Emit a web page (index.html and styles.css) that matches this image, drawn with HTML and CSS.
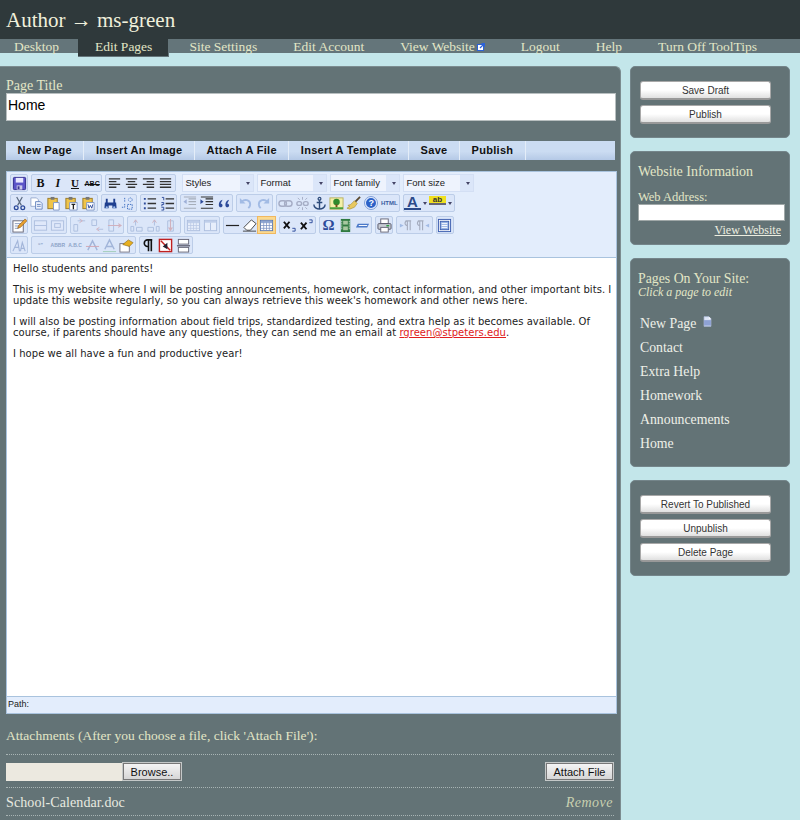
FILE: index.html
```html
<!DOCTYPE html>
<html lang="en">
<head>
    <meta charset="UTF-8">
    <title>Author - ms-green</title>
    <link rel="stylesheet" href="styles.css">
</head>
<body>
    <svg class="defs" width="0" height="0">
        <symbol id="i-save" viewBox="0 0 16 16"><rect x="1.500" y="1.500" width="13" height="13" rx="1" fill="#5b55c8" stroke="#2f2a8c"/><rect x="4" y="2" width="8" height="5" fill="#e8e8ff"/><rect x="5" y="10" width="6" height="4.500" fill="#c9c9e8"/><rect x="6" y="11" width="2" height="3" fill="#3a3590"/></symbol>
        <symbol id="i-left" viewBox="0 0 16 16"><path d="M2 3h12M2 6h8M2 9h12M2 12h8" stroke="#333" stroke-width="1.400"/></symbol>
        <symbol id="i-center" viewBox="0 0 16 16"><path d="M2 3h12M4 6h8M2 9h12M4 12h8" stroke="#333" stroke-width="1.400"/></symbol>
        <symbol id="i-right" viewBox="0 0 16 16"><path d="M2 3h12M6 6h8M2 9h12M6 12h8" stroke="#333" stroke-width="1.400"/></symbol>
        <symbol id="i-full" viewBox="0 0 16 16"><path d="M2 3h12M2 6h12M2 9h12M2 12h12" stroke="#333" stroke-width="1.400"/></symbol>
        <symbol id="i-cut" viewBox="0 0 16 16"><path d="M5 1l5 9M11 1l-5 9" stroke="#5a6a80" stroke-width="1.300"/><circle cx="4.500" cy="12.500" r="2" fill="none" stroke="#2c4a9a" stroke-width="1.400"/><circle cx="11.500" cy="12.500" r="2" fill="none" stroke="#2c4a9a" stroke-width="1.400"/></symbol>
        <symbol id="i-copy" viewBox="0 0 16 16"><path d="M2 2h6l2 2v7H2z" fill="#fff" stroke="#9aaccf"/><path d="M7 6h5l2 2v6H7z" fill="#eef3fd" stroke="#6a88c0"/><path d="M8.500 9h4M8.500 11h4" stroke="#6a88c0"/></symbol>
        <symbol id="i-paste" viewBox="0 0 16 16"><rect x="2" y="2.500" width="10" height="11" fill="#efc44a" stroke="#9a7a28"/><rect x="5" y="1" width="4" height="3" fill="#777"/><path d="M8 7h6v8H8z" fill="#fff" stroke="#7f96c4"/></symbol>
        <symbol id="i-pastetext" viewBox="0 0 16 16"><rect x="2" y="2.500" width="10" height="11" fill="#efc44a" stroke="#9a7a28"/><rect x="5" y="1" width="4" height="3" fill="#777"/><path d="M6 7h8v8H6z" fill="#fff" stroke="#7f96c4"/><path d="M8 9h4M10 9v5" stroke="#222" stroke-width="1.400"/></symbol>
        <symbol id="i-pasteword" viewBox="0 0 16 16"><rect x="2" y="2.500" width="10" height="11" fill="#efc44a" stroke="#9a7a28"/><rect x="5" y="1" width="4" height="3" fill="#777"/><path d="M6 7h8v8H6z" fill="#fff" stroke="#7f96c4"/><path d="M7.500 9l1 4 1.500-3 1.500 3 1-4" fill="none" stroke="#2c4a9a"/></symbol>
        <symbol id="i-find" viewBox="0 0 16 16"><path d="M2 7h4v6H1.500zM10 7h4l.5 6H10zM6 7h4v3H6zM3 3h2v4H3zM11 3h2v4h-2z" fill="#1f3f8f"/><circle cx="4" cy="12" r="1.200" fill="#9fc0f0"/><circle cx="12" cy="12" r="1.200" fill="#9fc0f0"/></symbol>
        <symbol id="i-replace" viewBox="0 0 16 16"><path d="M5 2v5M2 12h3V8" fill="none" stroke="#3a6cc0" stroke-dasharray="1.500 1"/><circle cx="11" cy="4" r="2" fill="none" stroke="#3a6cc0" stroke-dasharray="1 1"/><path d="M8 9h5v5H8z" fill="none" stroke="#3a6cc0" stroke-dasharray="1.500 1"/></symbol>
        <symbol id="i-ul" viewBox="0 0 16 16"><path d="M6 3h9M6 8h9M6 13h9" stroke="#333" stroke-width="1.400"/><path d="M2 2h2v2H2zM2 7h2v2H2zM2 12h2v2H2z" fill="#2c4a9a"/></symbol>
        <symbol id="i-ol" viewBox="0 0 16 16"><path d="M6 3h9M6 8h9M6 13h9" stroke="#333" stroke-width="1.400"/><path d="M2 1.500h2v3M1.500 7H4v2H2v2M1.500 12H4v3H1.500" fill="none" stroke="#2c4a9a"/></symbol>
        <symbol id="i-outdent" viewBox="0 0 16 16"><path d="M7 3h8M7 6h8M7 9h8M2 13h13M2 1h13" stroke="#444" stroke-width="1.200"/><path d="M5 3.500v5L1.500 6z" fill="#2c4a9a"/></symbol>
        <symbol id="i-indent" viewBox="0 0 16 16"><path d="M7 3h8M7 6h8M7 9h8M2 13h13M2 1h13" stroke="#333" stroke-width="1.200"/><path d="M1.500 3.500v5L5 6z" fill="#2c4a9a"/></symbol>
        <symbol id="i-quote" viewBox="0 0 16 16"><path d="M7 4C4 5 3 7 3 9.500 3 11 4 12 5 12s2-1 2-2-1-2-2-2M14 4c-3 1-4 3-4 5.500 0 1.500 1 2.500 2 2.500s2-1 2-2-1-2-2-2" fill="#2c4a9a"/></symbol>
        <symbol id="i-undo" viewBox="0 0 16 16"><path d="M4 6c3-3 9-2 9 3 0 2-1 3-2 4" fill="none" stroke="#3a6cc0" stroke-width="2"/><path d="M2 2v6h6z" fill="#3a6cc0"/></symbol>
        <symbol id="i-redo" viewBox="0 0 16 16"><path d="M12 6C9 3 3 4 3 9c0 2 1 3 2 4" fill="none" stroke="#3a6cc0" stroke-width="2"/><path d="M14 2v6H8z" fill="#3a6cc0"/></symbol>
        <symbol id="i-link" viewBox="0 0 16 16"><rect x="1" y="5" width="8" height="6" rx="3" fill="none" stroke="#446" stroke-width="1.500"/><rect x="7" y="5" width="8" height="6" rx="3" fill="none" stroke="#446" stroke-width="1.500"/></symbol>
        <symbol id="i-unlink" viewBox="0 0 16 16"><rect x="2" y="6" width="5" height="4" rx="2" fill="none" stroke="#446" stroke-width="1.500"/><rect x="9" y="6" width="5" height="4" rx="2" fill="none" stroke="#446" stroke-width="1.500"/><path d="M8 1v3M8 12v3M3 2l2 2M13 2l-2 2M3 14l2-2M13 14l-2-2" stroke="#446"/></symbol>
        <symbol id="i-anchor" viewBox="0 0 16 16"><circle cx="8" cy="3" r="1.500" fill="none" stroke="#2c4a7a" stroke-width="1.300"/><path d="M8 4.500V14M5 7h6M2 9c0 3 3 5 6 5s6-2 6-5" fill="none" stroke="#2c4a7a" stroke-width="1.500"/></symbol>
        <symbol id="i-image" viewBox="0 0 16 16"><rect x="1" y="2" width="14" height="12" fill="#f4f0a8" stroke="#b8b060"/><circle cx="8" cy="6.500" r="3.500" fill="#2f8a2c"/><rect x="7" y="9" width="2" height="3" fill="#7a4a1c"/><path d="M1 12h14v2H1z" fill="#4aa03c"/></symbol>
        <symbol id="i-clean" viewBox="0 0 16 16"><path d="M15 1L9 7" stroke="#5a4a30" stroke-width="2"/><path d="M9 5l3 3-3 4-5 2-3-1 3-2-2-1 3-1z" fill="#e8c860" stroke="#a08a30" stroke-width=".6"/></symbol>
        <symbol id="i-edit" viewBox="0 0 16 16"><rect x="1" y="3" width="11" height="12" fill="#fff" stroke="#667"/><path d="M3 6h7M3 8.500h5M3 11h4" stroke="#8899bb"/><path d="M14 1l2 2-7 7-3 1 1-3z" fill="#e8a030" stroke="#805010" stroke-width=".6"/></symbol>
        <symbol id="i-rows" viewBox="0 0 16 16"><rect x="1.500" y="3" width="13" height="10" fill="#e8eefc" stroke="#5a78b0"/><path d="M1.500 8h13" stroke="#5a78b0"/></symbol>
        <symbol id="i-box" viewBox="0 0 16 16"><rect x="1.500" y="3" width="13" height="10" fill="#e8eefc" stroke="#5a78b0"/><rect x="5" y="6" width="6" height="4" fill="none" stroke="#5a78b0"/></symbol>
        <symbol id="i-tl" viewBox="0 0 16 16"><path d="M2 7h4v7H2zM6 3h8" fill="none" stroke="#5a78b0"/><path d="M8 5l3-2-3-2" fill="none" stroke="#c05050"/></symbol>
        <symbol id="i-tm" viewBox="0 0 16 16"><path d="M2 2h5v6H2zM8 12h6" fill="none" stroke="#5a78b0"/><path d="M10 10l-3 2 3 2" fill="none" stroke="#c05050"/></symbol>
        <symbol id="i-tr" viewBox="0 0 16 16"><path d="M2 2h5v12H2z" fill="none" stroke="#5a78b0"/><path d="M1 8h13M12 6l3 2-3 2" fill="none" stroke="#c05050" stroke-width="1.200"/></symbol>
        <symbol id="i-c1" viewBox="0 0 16 16"><path d="M2 9h3v5H2zM8 10h6v4H8zM7 2v6" fill="none" stroke="#5a78b0"/><path d="M5 5l2-3 2 3" fill="none" stroke="#c05050"/></symbol>
        <symbol id="i-c2" viewBox="0 0 16 16"><path d="M2 10h6v4H2zM11 9h3v5h-3zM9 2v6" fill="none" stroke="#5a78b0"/><path d="M7 5l2-3 2 3" fill="none" stroke="#c05050"/></symbol>
        <symbol id="i-c3" viewBox="0 0 16 16"><path d="M5 3h6v11H5z" fill="none" stroke="#5a78b0"/><path d="M8 1v12M6 10l2 3 2-3" fill="none" stroke="#c05050" stroke-width="1.200"/></symbol>
        <symbol id="i-table" viewBox="0 0 16 16"><rect x="1.500" y="2.500" width="13" height="11" fill="#fff" stroke="#5a78b0"/><path d="M1.500 5h13M1.500 8h13M1.500 11h13M5 2.500v11M8 2.500v11M11 2.500v11" stroke="#7a90c0" stroke-width=".8"/><path d="M2 3h12v2H2z" fill="#8ca4d0"/></symbol>
        <symbol id="i-split" viewBox="0 0 16 16"><rect x="1.500" y="2.500" width="13" height="11" fill="#fff" stroke="#5a78b0"/><path d="M2 3h12v2H2z" fill="#8ca4d0"/><path d="M8 5v8" stroke="#5a78b0"/></symbol>
        <symbol id="i-hr" viewBox="0 0 16 16"><path d="M1 8h14" stroke="#222" stroke-width="1.300"/></symbol>
        <symbol id="i-erase" viewBox="0 0 16 16"><path d="M10 2l5 4-6 7H5L2 10z" fill="#fff" stroke="#444"/><path d="M1 14h14" stroke="#444"/></symbol>
        <symbol id="i-sub" viewBox="0 0 16 16"><path d="M2 4l6 7M8 4l-6 7" stroke="#111" stroke-width="2"/><path d="M11 11h3v3h-3" fill="none" stroke="#2c4a9a"/></symbol>
        <symbol id="i-sup" viewBox="0 0 16 16"><path d="M2 5l6 7M8 5l-6 7" stroke="#111" stroke-width="2"/><path d="M11 2h3v3h-3" fill="none" stroke="#2c4a9a"/></symbol>
        <symbol id="i-media" viewBox="0 0 16 16"><rect x="3" y="1" width="10" height="14" fill="#2f7a40"/><rect x="5.500" y="3" width="5" height="4" fill="#a8c8a0"/><rect x="5.500" y="9" width="5" height="4" fill="#a8c8a0"/><path d="M4 3v10M12 3v10" stroke="#fff" stroke-dasharray="1 1"/></symbol>
        <symbol id="i-nbsp" viewBox="0 0 16 16"><path d="M1 10l2-4h12l-2 4z" fill="#4a78c8"/><path d="M4 8h9" stroke="#fff"/></symbol>
        <symbol id="i-print" viewBox="0 0 16 16"><rect x="4" y="1" width="8" height="5" fill="#fff" stroke="#667"/><rect x="1" y="6" width="14" height="6" rx="1" fill="#c8ccd4" stroke="#556"/><rect x="4" y="10" width="8" height="5" fill="#fff" stroke="#667"/><rect x="10" y="7.500" width="3" height="1.500" fill="#2c9a3c"/></symbol>
        <symbol id="i-ltr" viewBox="0 0 16 16"><path d="M8 3h6M10 3v10M13 3v10M10 8a2.500 2.500 0 0 1 0-5" fill="none" stroke="#445" stroke-width="1.200"/><path d="M2 6l4 2-4 2z" fill="#3a6cc0"/></symbol>
        <symbol id="i-rtl" viewBox="0 0 16 16"><path d="M2 3h6M4 3v10M7 3v10M4 8a2.500 2.500 0 0 1 0-5" fill="none" stroke="#445" stroke-width="1.200"/><path d="M14 6l-4 2 4 2z" fill="#3a6cc0"/></symbol>
        <symbol id="i-screen" viewBox="0 0 16 16"><rect x="1.500" y="1.500" width="13" height="13" fill="#fff" stroke="#3a5cae"/><rect x="3.500" y="3.500" width="9" height="9" fill="#9ab4e4" stroke="#3a5cae"/><path d="M5 6h6M5 8h6M5 10h6" stroke="#fff"/></symbol>
        <symbol id="i-style" viewBox="0 0 16 16"><path d="M1 14L6 3l2 11M3 10h4M9 14l2-9 3 9M10 11h3" fill="none" stroke="#3a5ca0" stroke-width="1.200"/></symbol>
        <symbol id="i-strike" viewBox="0 0 16 16"><path d="M3 13L8 3l5 10" fill="none" stroke="#3a5ca0" stroke-width="1.500"/><path d="M1 9h14" stroke="#c03030"/></symbol>
        <symbol id="i-under" viewBox="0 0 16 16"><path d="M3 12L8 2l5 10M5 9h6" fill="none" stroke="#3a5ca0" stroke-width="1.500"/><path d="M1 14.500h14" stroke="#30a040"/></symbol>
        <symbol id="i-attr" viewBox="0 0 16 16"><rect x="1" y="6" width="10" height="9" fill="#fff" stroke="#778"/><path d="M4 7l6-5 5 3-4 4z" fill="#e8b020" stroke="#806010" stroke-width=".6"/></symbol>
        <symbol id="i-pilcrow" viewBox="0 0 16 16"><path d="M12 2H7a3.500 3.500 0 0 0 0 7h1V2M8 9v5M11 2v12" fill="none" stroke="#111" stroke-width="1.700"/></symbol>
        <symbol id="i-noedit" viewBox="0 0 16 16"><rect x="1.500" y="1.500" width="13" height="13" fill="#fff" stroke="#c02020" stroke-width="1.500"/><path d="M3 3l10 10" stroke="#c02020" stroke-width="1.500"/><path d="M5 9l5-4v7z" fill="#223"/></symbol>
        <symbol id="i-break" viewBox="0 0 16 16"><rect x="2.500" y="1.500" width="11" height="5" fill="#fff" stroke="#667"/><rect x="2.500" y="10" width="11" height="5" fill="#fff" stroke="#667"/><path d="M1 8.300h14" stroke="#667" stroke-width="1.500"/></symbol>
        <symbol id="i-doc" viewBox="0 0 16 16"><path d="M3 1h7l3 3v11H3z" fill="#dde5f6" stroke="#b4c2e4"/><path d="M10 1v3h3" fill="#fff"/><path d="M3 6h10v8H3z" fill="#8ea2d4"/></symbol>
    </svg>

    <div class="top">
        <h1>Author &rarr; ms-green</h1>
    </div>
    <ul class="nav">
        <li class="first">Desktop</li>
        <li class="active">Edit Pages</li>
        <li>Site Settings</li>
        <li>Edit Account</li>
        <li>View Website<svg class="ext" viewBox="0 0 8 8"><rect x=".5" y="1.500" width="6" height="6" fill="#fff" stroke="#2c62d8"/><path d="M3 5l4-4M4.500 .7h3v3" fill="none" stroke="#2c62d8" stroke-width="1.200"/></svg></li>
        <li>Logout</li>
        <li>Help</li>
        <li>Turn Off ToolTips</li>
    </ul>

    <div class="page">
        <div class="main">
            <label class="lbl">Page Title</label>
            <input class="title" type="text" value="Home">

            <div class="menu">
                <a>New Page</a><a>Insert An Image</a><a>Attach A File</a><a>Insert A Template</a><a>Save</a><a>Publish</a>
            </div>

            <div class="editor">
                <div class="toolbar">
                    <div class="row">
                        <span class="grp one"><i class="btn"><svg><use href="#i-save"/></svg></i></span>
                        <span class="grp"><i class="btn txt b">B</i><i class="btn txt it">I</i><i class="btn txt u">U</i><i class="btn txt abc">ABC</i></span>
                        <span class="grp"><i class="btn"><svg><use href="#i-left"/></svg></i><i class="btn"><svg><use href="#i-center"/></svg></i><i class="btn"><svg><use href="#i-right"/></svg></i><i class="btn"><svg><use href="#i-full"/></svg></i></span>
                        <span class="sel s1">Styles</span>
                        <span class="sel s2">Format</span>
                        <span class="sel s3">Font family</span>
                        <span class="sel s4">Font size</span>
                    </div>
                    <div class="row">
                        <span class="grp"><i class="btn"><svg><use href="#i-cut"/></svg></i><i class="btn"><svg><use href="#i-copy"/></svg></i><i class="btn"><svg><use href="#i-paste"/></svg></i><i class="btn"><svg><use href="#i-pastetext"/></svg></i><i class="btn"><svg><use href="#i-pasteword"/></svg></i></span>
                        <span class="grp"><i class="btn"><svg><use href="#i-find"/></svg></i><i class="btn"><svg><use href="#i-replace"/></svg></i></span>
                        <span class="grp"><i class="btn"><svg><use href="#i-ul"/></svg></i><i class="btn"><svg><use href="#i-ol"/></svg></i></span>
                        <span class="grp"><i class="btn off"><svg><use href="#i-outdent"/></svg></i><i class="btn"><svg><use href="#i-indent"/></svg></i><i class="btn"><svg><use href="#i-quote"/></svg></i></span>
                        <span class="grp"><i class="btn off"><svg><use href="#i-undo"/></svg></i><i class="btn off"><svg><use href="#i-redo"/></svg></i></span>
                        <span class="grp"><i class="btn off"><svg><use href="#i-link"/></svg></i><i class="btn off"><svg><use href="#i-unlink"/></svg></i><i class="btn"><svg><use href="#i-anchor"/></svg></i><i class="btn"><svg><use href="#i-image"/></svg></i><i class="btn"><svg><use href="#i-clean"/></svg></i><i class="btn"><span class="help">?</span></i><i class="btn txt html">HTML</i></span>
                        <span class="grp"><i class="btn txt color">A</i><i class="drop"></i><i class="btn txt marker">ab</i><i class="drop"></i></span>
                    </div>
                    <div class="row row3">
                        <span class="grp one"><i class="btn"><svg><use href="#i-edit"/></svg></i></span>
                        <span class="grp"><i class="btn off"><svg><use href="#i-rows"/></svg></i><i class="btn off"><svg><use href="#i-box"/></svg></i></span>
                        <span class="grp"><i class="btn off"><svg><use href="#i-tl"/></svg></i><i class="btn off"><svg><use href="#i-tm"/></svg></i><i class="btn off"><svg><use href="#i-tr"/></svg></i></span>
                        <span class="grp"><i class="btn off"><svg><use href="#i-c1"/></svg></i><i class="btn off"><svg><use href="#i-c2"/></svg></i><i class="btn off"><svg><use href="#i-c3"/></svg></i></span>
                        <span class="grp"><i class="btn off"><svg><use href="#i-table"/></svg></i><i class="btn off"><svg><use href="#i-split"/></svg></i></span>
                        <span class="grp"><i class="btn"><svg><use href="#i-hr"/></svg></i><i class="btn"><svg><use href="#i-erase"/></svg></i><i class="btn on"><svg><use href="#i-table"/></svg></i></span>
                        <span class="grp"><i class="btn"><svg><use href="#i-sub"/></svg></i><i class="btn"><svg><use href="#i-sup"/></svg></i></span>
                        <span class="grp"><i class="btn txt omega">&Omega;</i><i class="btn"><svg><use href="#i-media"/></svg></i><i class="btn"><svg><use href="#i-nbsp"/></svg></i></span>
                        <span class="grp one"><i class="btn"><svg><use href="#i-print"/></svg></i></span>
                        <span class="grp"><i class="btn off"><svg><use href="#i-ltr"/></svg></i><i class="btn off"><svg><use href="#i-rtl"/></svg></i></span>
                        <span class="grp one"><i class="btn"><svg><use href="#i-screen"/></svg></i></span>
                    </div>
                    <div class="row">
                        <span class="grp one"><i class="btn off"><svg><use href="#i-style"/></svg></i></span>
                        <span class="grp"><i class="btn tiny">&ldquo;&rdquo;</i><i class="btn tiny">ABBR</i><i class="btn tiny">A.B.C</i><i class="btn off"><svg><use href="#i-strike"/></svg></i><i class="btn off"><svg><use href="#i-under"/></svg></i><i class="btn"><svg><use href="#i-attr"/></svg></i></span>
                        <span class="grp"><i class="btn"><svg><use href="#i-pilcrow"/></svg></i><i class="btn"><svg><use href="#i-noedit"/></svg></i><i class="btn"><svg><use href="#i-break"/></svg></i></span>
                    </div>
                </div>
                <div class="content">
                    <p>Hello students and parents!</p>
                    <p>This is my website where I will be posting announcements, homework, contact information, and other important bits. I update this website regularly, so you can always retrieve this week's homework and other news here.</p>
                    <p>I will also be posting information about field trips, standardized testing, and extra help as it becomes available. Of course, if parents should have any questions, they can send me an email at <a href="#">rgreen@stpeters.edu</a>.</p>
                    <p>I hope we all have a fun and productive year!</p>
                </div>
                <div class="status">Path:</div>
            </div>

            <div class="att-head">Attachments (After you choose a file, click 'Attach File'):</div>
            <div class="att-row">
                <span class="file"></span><button class="raised">Browse..</button>
                <button class="raised attach">Attach File</button>
            </div>
            <div class="att-file">
                <span>School-Calendar.doc</span>
                <em>Remove</em>
            </div>
        </div>

        <div class="side">
            <div class="box btns">
                <button class="sbtn">Save Draft</button>
                <button class="sbtn">Publish</button>
            </div>
            <div class="box info">
                <h3>Website Information</h3>
                <label>Web Address:</label>
                <input type="text" class="addr">
                <a class="viewlink" href="#">View Website</a>
            </div>
            <div class="box pages">
                <h3>Pages On Your Site:</h3>
                <em>Click a page to edit</em>
                <ul>
                    <li>New Page <svg class="doc"><use href="#i-doc"/></svg></li>
                    <li>Contact</li>
                    <li>Extra Help</li>
                    <li>Homework</li>
                    <li>Announcements</li>
                    <li>Home</li>
                </ul>
            </div>
            <div class="box btns">
                <button class="sbtn">Revert To Published</button>
                <button class="sbtn">Unpublish</button>
                <button class="sbtn">Delete Page</button>
            </div>
        </div>
    </div>
</body>
</html>
```

FILE: styles.css
```css
* {
    box-sizing: border-box;
}

html, body {
    margin: 0;
    padding: 0;
    height: 820px;
    overflow: hidden;
}

body {
    background-color: #c3e6ea;
    font-family: "Liberation Serif", serif;
    color: #e2e6c6;
}

.defs {
    position: absolute;
}

.top {
    height: 39px;
    background-color: #2f393b;
    padding: 7px 6px 0;
}

.top h1 {
    margin: 0;
    font-size: 21px;
    line-height: 26px;
    font-weight: normal;
    color: #f0f0dc;
}

.nav {
    list-style: none;
    margin: 0;
    padding: 0;
    height: 14px;
    display: flex;
    background-color: #64757a;
    font-size: 13.5px;
    line-height: 15px;
}

.nav li {
    padding: 0 18px;
    height: 14px;
    white-space: nowrap;
}

.nav .first {
    padding: 0 19px 0 14px;
}

.nav .active {
    height: 18px;
    padding: 0 16px 0 17px;
    margin-right: 2px;
    background-color: #2f393b;
    border-right: 1px solid #64757a;
    border-bottom: 1px solid #64757a;
}

.ext {
    width: 8px;
    height: 8px;
    margin-left: 2px;
}

.page {
    display: flex;
    margin-top: 13px;
    align-items: flex-start;
}

.main {
    width: 621px;
    height: 754px;
    padding: 12px 4px 0 6px;
    background-color: #637376;
    border-top-right-radius: 6px;
    border: 1px solid #7c8c90;
    border-width: 1px 1px 0 0;
}

.lbl {
    display: block;
    font-size: 14px;
    line-height: 14px;
    height: 14px;
}

.title {
    display: block;
    width: 610px;
    height: 28px;
    border: 1px solid #b8bfc0;
    background-color: #fff;
    padding: 0 1px 4px;
    font-family: "Liberation Sans", sans-serif;
    font-size: 14px;
    color: #000;
}

.menu {
    display: flex;
    width: 609px;
    height: 19px;
    margin-top: 20px;
    background: linear-gradient(#cbdcf2 55%, #b5c9e6);
}

.menu a {
    padding: 0 11.5px;
    border-right: 1px solid #e4edf8;
    font: bold 11px/19px "Liberation Sans", sans-serif;
    letter-spacing: 0.3px;
    color: #111;
}

.editor {
    width: 611px;
    height: 543px;
    margin-top: 11px;
    background-color: #fff;
    border: 1px solid #a9c3de;
    display: flex;
    flex-direction: column;
    color: #111;
}

.toolbar {
    background-color: #e3edfc;
    border-bottom: 1px solid #a9c3de;
    height: 86px;
    padding: 2px 3px 0;
    display: flex;
    flex-direction: column;
    gap: 2px;
}

.row {
    display: flex;
    gap: 3px;
    height: 18px;
}

.row3 {
    margin-top: 2px;
}

.grp {
    display: flex;
    border: 1px solid #bccde8;
    border-radius: 2px;
    background-color: #dbe6f9;
}

.grp.one {
    width: 18px;
}

.btn {
    width: 17.2px;
    flex: none;
    height: 16px;
    display: flex;
    align-items: center;
    justify-content: center;
    font-style: normal;
}

.one .btn {
    width: 16px;
}

.btn svg {
    width: 15px;
    height: 15px;
}

.btn.off svg {
    opacity: 0.35;
}

.btn.on {
    background-color: #fbd98e;
    outline: 1px solid #f0b860;
}

.txt {
    font-family: "Liberation Serif", serif;
    color: #111;
}

.b {
    font-weight: bold;
    font-size: 12px;
}

.it {
    font-style: italic;
    font-weight: bold;
    font-size: 12px;
}

.u {
    text-decoration: underline;
    font-weight: bold;
    font-size: 11px;
}

.abc {
    font-size: 7px;
    font-weight: bold;
    text-decoration: line-through;
    font-family: "Liberation Sans", sans-serif;
}

.html {
    width: 19px;
    font: bold 6px "Liberation Sans", sans-serif;
    color: #3a5ca0;
}

.help {
    width: 14px;
    height: 14px;
    border-radius: 50%;
    border: 2px solid #e4ecfc;
    outline: 1px solid #7f9fd8;
    outline-offset: -1px;
    background-color: #2c62c8;
    color: #fff;
    text-align: center;
    font: bold 9px/10px "Liberation Sans", sans-serif;
}

.tiny {
    font: bold 5px "Liberation Sans", sans-serif;
    color: #8ea4c8;
}

.omega {
    font-size: 15px;
    font-weight: bold;
    color: #2c4a9a;
}

.color {
    font: bold 15px "Liberation Sans", sans-serif;
    color: #2c4a8a;
    border-bottom: 2px solid #2c4a8a;
    height: 15px;
    line-height: 14px;
}

.marker {
    font: bold 8px "Liberation Sans", sans-serif;
    background-color: #f0e020;
    height: 9px;
    color: #333;
    align-self: flex-start;
    margin-top: 1px;
    border-bottom: 2px solid #667;
}

.drop {
    width: 8px;
    position: relative;
}

.drop::after, .sel::after {
    content: "";
    position: absolute;
    right: 2px;
    top: 7px;
    border-left: 2.5px solid transparent;
    border-right: 2.5px solid transparent;
    border-top: 3px solid #446;
}

.sel {
    position: relative;
    height: 18px;
    padding: 0 3px;
    background: linear-gradient(to left, #dbe6f9 13px, #eef3fd 13px);
    border: 1px solid #d3dff4;
    font: 9.5px/16px "Liberation Sans", sans-serif;
    color: #222;
}

.sel::after {
    right: 3px;
}

.s1 {
    width: 72px;
    margin-left: 3px;
}

.s2, .s3 {
    width: 70px;
}

.s4 {
    width: 71px;
}

.content {
    flex: 1;
    padding: 5px 4px 5px 6px;
    font-family: "DejaVu Sans", sans-serif;
    font-size: 10px;
    line-height: 11px;
    letter-spacing: 0.04px;
    color: #222;
}

.content p {
    margin: 0 0 10px;
}

.content a {
    color: #e02020;
}

.status {
    height: 17px;
    background-color: #e3edfc;
    border-top: 1px solid #a9c3de;
    padding-left: 1px;
    font: 9px/15px "Liberation Sans", sans-serif;
    color: #222;
}

.att-head {
    margin-top: 14px;
    font-size: 13.5px;
    line-height: 16px;
    letter-spacing: 0.03px;
    height: 27px;
    width: 608px;
    border-bottom: 1px dotted #a8b4b4;
}

.att-row {
    display: flex;
    width: 608px;
    height: 33px;
    padding-top: 7px;
    border-bottom: 1px dotted #a8b4b4;
}

.file {
    width: 116px;
    height: 18px;
    margin-top: 1px;
    background-color: #ece9e0;
}

.raised {
    height: 19px;
    padding: 0;
    border: 1px solid #c4c8c8;
    box-shadow: inset 0 0 0 1px #777;
    background: linear-gradient(#f6f6f6, #d4d4d4);
    font: 11px "Liberation Sans", sans-serif;
    color: #111;
    width: 60px;
}

.attach {
    width: 69px;
    margin-left: auto;
}

.att-file {
    display: flex;
    justify-content: space-between;
    width: 608px;
    height: 28px;
    padding-right: 1px;
    font-size: 14px;
    line-height: 30px;
    letter-spacing: 0.1px;
    color: #e8eae0;
    border-bottom: 1px dotted #a8b4b4;
}

.att-file em {
    letter-spacing: 0.5px;
    color: #c8d0b0;
}

.side {
    width: 160px;
    margin-left: 9px;
    display: flex;
    flex-direction: column;
    gap: 13px;
}

.box {
    background-color: #637376;
    border: 1px solid #74858a;
    border-radius: 5px;
}

.btns {
    padding: 14px 9px 0;
    display: flex;
    flex-direction: column;
    gap: 5px;
    height: 72px;
}

.side .box:last-child {
    height: 96px;
}

.sbtn {
    width: 131px;
    height: 19px;
    padding: 0;
    border: 1px solid #a8a8a8;
    border-bottom: 2px solid #999;
    border-radius: 3px;
    background: linear-gradient(#fff 50%, #e0e0e0);
    font: 10px "Liberation Sans", sans-serif;
    color: #333;
}

.box h3 {
    margin: 0;
    font-size: 14px;
    line-height: 16px;
    font-weight: normal;
}

.info {
    height: 94px;
    padding: 12px 4px 0 7px;
}

.info label {
    display: block;
    margin-top: 10px;
    font-size: 12.5px;
    line-height: 14px;
}

.addr {
    display: block;
    width: 147px;
    height: 17px;
    border: 1px solid #a0a8a8;
    background-color: #fff;
}

.viewlink {
    display: block;
    text-align: right;
    width: 143px;
    margin-top: 2px;
    font-size: 12px;
    line-height: 14px;
    color: #eceee0;
}

.pages {
    height: 209px;
    padding: 12px 8px 0 7px;
}

.pages h3 {
    font-size: 13.8px;
    line-height: 15px;
}

.pages em {
    display: block;
    font-size: 12px;
    line-height: 12px;
}

.pages ul {
    list-style: none;
    margin: 14px 0 0 2px;
    padding: 0;
    font-size: 13.8px;
    color: #eef0e8;
}

.pages li {
    height: 24px;
    line-height: 24px;
}

.doc {
    width: 11px;
    height: 13px;
    margin-left: 2px;
    vertical-align: 0;
}
```
